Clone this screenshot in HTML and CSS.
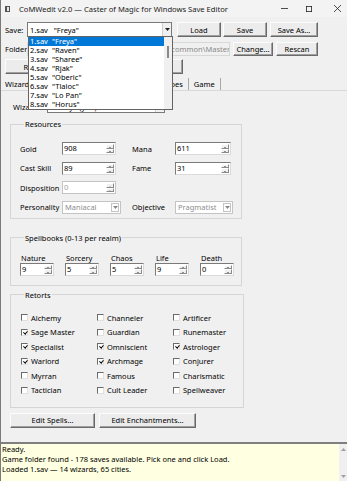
FILE: index.html
```html
<!DOCTYPE html>
<html lang="en">
  <head>
    <meta charset="UTF-8" />
    <title>CoMWedit v2.0 — Caster of Magic for Windows Save Editor</title>
    <link rel="stylesheet" href="styles.css">
  </head>
  <body>
    <div class="window">
      <!-- Title bar -->
      <div class="titlebar">
        <span class="app-icon"></span>
        <span class="title-text">CoMWedit v2.0 — Caster of Magic for Windows Save Editor</span>
        <div class="win-controls">
          <svg class="wc-min" width="7" height="7" viewBox="0 0 7 7"><path d="M0 3.5H7" stroke="#222" stroke-width="0.8"/></svg>
          <svg class="wc-max" width="6" height="6" viewBox="0 0 6 6"><rect x="0.4" y="0.4" width="5.2" height="5.2" fill="none" stroke="#222" stroke-width="0.8"/></svg>
          <svg class="wc-close" width="7" height="7" viewBox="0 0 7 7"><path d="M0 0L7 7M7 0L0 7" stroke="#222" stroke-width="0.8"/></svg>
        </div>
      </div>

      <div class="main">
        <!-- Save file row -->
        <div class="row row-save">
          <span class="row-label">Save:</span>
          <div class="combo save-combo">
            <span class="combo-text">1.sav&nbsp;&nbsp; "Freya"</span>
            <span class="combo-arrow"><svg width="5" height="3" viewBox="0 0 5 3"><path d="M0 0H5L2.5 3Z" fill="#222"/></svg></span>
          </div>
          <button class="btn btn-load">Load</button>
          <button class="btn btn-save">Save</button>
          <button class="btn btn-saveas">Save As...</button>
        </div>

        <!-- Game folder row -->
        <div class="row row-folder">
          <span class="row-label">Folder:</span>
          <div class="entry entry-folder">C:\Program Files (x86)\Steam\steamapps\common\Master of Magic</div>
          <button class="btn btn-change">Change...</button>
          <button class="btn btn-rescan">Rescan</button>
        </div>

        <div class="row row-actions">
          <button class="btn btn-reload">Reload from Disk</button>
          <button class="btn btn-backup">Restore Backup...</button>
        </div>

        <!-- Tabs -->
        <div class="tabs">
          <span class="tab tab-active">Wizards</span>
          <span class="tab">Diplomacy</span>
          <span class="tab">Cities</span>
          <span class="tab">Armies</span>
          <span class="tab">Heroes</span>
          <span class="tab">Game</span>
        </div>

        <div class="tab-panel">
          <div class="wizard-row">
            <span class="wizard-label">Wizard:</span>
            <div class="combo wizard-combo">
              <span class="combo-text">0: Freya (you)</span>
              <span class="combo-arrow"><svg width="5" height="3" viewBox="0 0 5 3"><path d="M0 0H5L2.5 3Z" fill="#222"/></svg></span>
            </div>
          </div>

          <!-- Resources -->
          <fieldset class="group group-resources">
            <legend>Resources</legend>
            <div class="res-grid">
              <span>Gold</span>
              <div class="spin"><span class="spin-val">908</span><span class="spin-arrows"><i class="up"></i><i class="down"></i></span></div>
              <span></span>
              <span>Mana</span>
              <div class="spin"><span class="spin-val">611</span><span class="spin-arrows"><i class="up"></i><i class="down"></i></span></div>

              <span>Cast Skill</span>
              <div class="spin"><span class="spin-val">89</span><span class="spin-arrows"><i class="up"></i><i class="down"></i></span></div>
              <span></span>
              <span>Fame</span>
              <div class="spin"><span class="spin-val">31</span><span class="spin-arrows"><i class="up"></i><i class="down"></i></span></div>

              <span>Disposition</span>
              <div class="spin spin-disabled"><span class="spin-val">0</span><span class="spin-arrows"><i class="up"></i><i class="down"></i></span></div>
              <span></span>
              <span></span>
              <span></span>

              <span>Personality</span>
              <div class="combo combo-disabled combo-personality">
                <span class="combo-text">Maniacal</span>
                <span class="combo-arrow"><svg width="5" height="3" viewBox="0 0 5 3"><path d="M0 0H5L2.5 3Z" fill="#888"/></svg></span>
              </div>
              <span></span>
              <span>Objective</span>
              <div class="combo combo-disabled combo-objective">
                <span class="combo-text">Pragmatist</span>
                <span class="combo-arrow"><svg width="5" height="3" viewBox="0 0 5 3"><path d="M0 0H5L2.5 3Z" fill="#888"/></svg></span>
              </div>
            </div>
          </fieldset>

          <!-- Spellbooks -->
          <fieldset class="group group-books">
            <legend>Spellbooks (0-13 per realm)</legend>
            <div class="books">
              <div class="book"><span class="book-name">Nature</span><div class="spin"><span class="spin-val">9</span><span class="spin-arrows"><i class="up"></i><i class="down"></i></span></div></div>
              <div class="book"><span class="book-name">Sorcery</span><div class="spin"><span class="spin-val">5</span><span class="spin-arrows"><i class="up"></i><i class="down"></i></span></div></div>
              <div class="book"><span class="book-name">Chaos</span><div class="spin"><span class="spin-val">5</span><span class="spin-arrows"><i class="up"></i><i class="down"></i></span></div></div>
              <div class="book"><span class="book-name">Life</span><div class="spin"><span class="spin-val">9</span><span class="spin-arrows"><i class="up"></i><i class="down"></i></span></div></div>
              <div class="book"><span class="book-name">Death</span><div class="spin"><span class="spin-val">0</span><span class="spin-arrows"><i class="up"></i><i class="down"></i></span></div></div>
            </div>
          </fieldset>

          <!-- Retorts -->
          <fieldset class="group group-retorts">
            <legend>Retorts</legend>
            <div class="retorts">
              <label class="check"><span class="box"></span>Alchemy</label>
              <label class="check"><span class="box"></span>Channeler</label>
              <label class="check"><span class="box"></span>Artificer</label>

              <label class="check"><span class="box checked"></span>Sage Master</label>
              <label class="check"><span class="box"></span>Guardian</label>
              <label class="check"><span class="box"></span>Runemaster</label>

              <label class="check"><span class="box checked"></span>Specialist</label>
              <label class="check"><span class="box checked"></span>Omniscient</label>
              <label class="check"><span class="box checked"></span>Astrologer</label>

              <label class="check"><span class="box checked"></span>Warlord</label>
              <label class="check"><span class="box checked"></span>Archmage</label>
              <label class="check"><span class="box"></span>Conjurer</label>

              <label class="check"><span class="box"></span>Myrran</label>
              <label class="check"><span class="box"></span>Famous</label>
              <label class="check"><span class="box"></span>Charismatic</label>

              <label class="check"><span class="box"></span>Tactician</label>
              <label class="check"><span class="box"></span>Cult Leader</label>
              <label class="check"><span class="box"></span>Spellweaver</label>
            </div>
          </fieldset>

          <div class="edit-row">
            <button class="btn btn-spells">Edit Spells...</button>
            <button class="btn btn-ench">Edit Enchantments...</button>
          </div>
        </div>
      </div>

      <!-- Status log -->
      <div class="status">
        <div class="status-text">
          Ready.<br>
          Game folder found - 178 saves available. Pick one and click Load.<br>
          Loaded 1.sav — 14 wizards, 65 cities.
        </div>
        <div class="status-scroll">
          <svg width="5" height="3" viewBox="0 0 5 3"><path d="M0 3H5L2.5 0Z" fill="#a0a0a0"/></svg>
          <svg width="5" height="3" viewBox="0 0 5 3"><path d="M0 0H5L2.5 3Z" fill="#a0a0a0"/></svg>
        </div>
      </div>

      <!-- Open save dropdown -->
      <div class="dropdown">
        <div class="dd-items">
          <div class="dd-item dd-selected"><span class="dd-file">1.sav</span>"Freya"</div>
          <div class="dd-item"><span class="dd-file">2.sav</span>"Raven"</div>
          <div class="dd-item"><span class="dd-file">3.sav</span>"Sharee"</div>
          <div class="dd-item"><span class="dd-file">4.sav</span>"Rjak"</div>
          <div class="dd-item"><span class="dd-file">5.sav</span>"Oberic"</div>
          <div class="dd-item"><span class="dd-file">6.sav</span>"Tlaloc"</div>
          <div class="dd-item"><span class="dd-file">7.sav</span>"Lo Pan"</div>
          <div class="dd-item"><span class="dd-file">8.sav</span>"Horus"</div>
        </div>
        <div class="dd-scroll"><span class="dd-thumb"></span></div>
      </div>
    </div>
  </body>
</html>
```

FILE: styles.css
```css
/* Base */
* {
  box-sizing: border-box;
}

body {
  margin: 0;
  width: 347px;
  height: 481px;
  overflow: hidden;
  background: #f0f0f0;
  color: #000;
  font-family: "Noto Sans", "Open Sans", sans-serif;
  font-size: 7.5px;
  line-height: 10px;
}

.window {
  position: relative;
  height: 481px;
  border-left: 1px solid #7a7a7a;
  display: flex;
  flex-direction: column;
}

/* Title bar */
.titlebar {
  height: 17px;
  flex: none;
  display: flex;
  align-items: center;
  background: #f3f3f3;
}

.app-icon {
  width: 5px;
  height: 6px;
  margin-left: 4px;
  border: 1px solid #555;
  border-left-width: 2px;
  background: #e4e9ef;
}

.title-text {
  margin-left: 9px;
  font-size: 7.6px;
  color: #1a1a1a;
}

.win-controls {
  margin-left: auto;
  display: flex;
  align-items: center;
  padding-right: 6px;
}

.wc-max {
  margin-left: 18px;
}

.wc-close {
  margin-left: 22px;
}

.main {
  flex: 1;
}

/* Toolbar rows */
.row {
  display: flex;
  align-items: stretch;
  margin-left: 4px;
  height: 15px;
}

.row-save {
  margin-top: 5px;
}

.row-folder {
  margin-top: 5px;
  height: 14px;
}

.row-actions {
  margin-top: 3px;
}

.row-label {
  width: 22px;
  display: flex;
  align-items: center;
}

.combo {
  display: flex;
  align-items: center;
  background: #fff;
  border: 1px solid #7a7a7a;
}

.combo-text {
  flex: 1;
  padding-left: 2px;
  white-space: nowrap;
  overflow: hidden;
}

.combo-arrow {
  width: 9px;
  align-self: stretch;
  display: flex;
  align-items: center;
  justify-content: center;
  border-left: 1px solid #d0d0d0;
  background: #f0f0f0;
}

.save-combo {
  width: 145px;
}

.entry {
  display: block;
  padding: 0 4px 0 2px;
  line-height: 12px;
  white-space: nowrap;
  overflow: hidden;
  color: #8a8a8a;
  background: #f0f0f0;
  border: 1px solid #d8d8d8;
}

.entry-folder {
  width: 203px;
  text-indent: -5px;
}

/* Buttons */
.btn {
  font: inherit;
  color: #000;
  padding: 0;
  background: #ececec;
  border: 1px solid;
  border-color: #fcfcfc #6a6a6a #6a6a6a #fcfcfc;
  box-shadow: inset -1px -1px #a0a0a0;
  white-space: nowrap;
}

.btn-load {
  width: 44px;
  margin-left: 5px;
}

.btn-save {
  width: 44px;
  margin-left: 2px;
}

.btn-saveas {
  width: 48px;
  margin-left: 3px;
}

.btn-change {
  width: 40px;
  margin-left: 3px;
}

.btn-rescan {
  width: 42px;
  margin-left: 3px;
}

.btn-reload {
  width: 87px;
  padding-left: 10px;
}

.btn-backup {
  width: 89px;
  margin-left: 2px;
}

/* Tabs */
.tabs {
  display: flex;
  margin-top: 4px;
  padding-left: 2px;
  height: 13px;
  border-bottom: 1px solid #d9d9d9;
}

.tab {
  padding: 0 5px;
  border-right: 1px solid #a8a8a8;
  line-height: 12px;
}

.tab-active {
  padding-left: 2px;
}

/* Wizard picker */
.wizard-row {
  display: flex;
  margin-top: 9px;
  margin-left: 12px;
  height: 13px;
}

.wizard-label {
  width: 34px;
  display: flex;
  align-items: center;
}

.wizard-combo {
  width: 118px;
}

/* Group boxes */
.group {
  margin: 6px 0 0 9px;
  width: 232px;
  border: 1px solid #d5d5d5;
  padding: 0 0 0 9px;
}

.group legend {
  padding: 0 1px;
  margin-left: 4px;
  line-height: 10px;
}

.group-resources {
  padding-top: 13px;
  padding-bottom: 4px;
}

.res-grid {
  display: grid;
  grid-template-columns: 42px 54px 16px 43px 56px;
  grid-auto-rows: 13px;
  row-gap: 6.5px;
  align-items: center;
}

.combo-disabled {
  border-color: #c4c4c4;
  height: 13px;
}

.combo-disabled .combo-text {
  color: #8e8e8e;
}

.combo-disabled .combo-arrow {
  background: #fff;
  border: 1px solid #c4c4c4;
  margin: 1px;
  width: 8px;
}

.combo-personality {
  width: 59px;
}

.combo-objective {
  width: 58px;
}

/* Spin boxes */
.spin {
  display: flex;
  height: 13px;
  background: #fff;
  border: 1px solid;
  border-color: #7a7a7a #dadada #dadada #7a7a7a;
}

.spin-val {
  flex: 1;
  padding-left: 1px;
  line-height: 11px;
}

.spin-arrows {
  width: 8px;
  display: flex;
  flex-direction: column;
  margin: 1px 1px 1px 0;
}

.spin-arrows i {
  flex: 1;
  position: relative;
  background: #f0f0f0;
  border: 1px solid;
  border-color: #fff #8a8a8a #8a8a8a #fff;
}

.spin-arrows i::after {
  content: "";
  position: absolute;
  left: 1.5px;
  border-left: 1.5px solid transparent;
  border-right: 1.5px solid transparent;
}

.spin-arrows .up::after {
  top: 1.5px;
  border-bottom: 1.5px solid #333;
}

.spin-arrows .down::after {
  top: 1.5px;
  border-top: 1.5px solid #333;
}

.spin-disabled {
  border-color: #c4c4c4;
}

.spin-disabled .spin-val {
  color: #a0a0a0;
}

.spin-disabled .spin-arrows i::after {
  border-top-color: #a8a8a8;
  border-bottom-color: #a8a8a8;
}

/* Spellbooks */
.group-books {
  margin-top: 14px;
  padding-top: 10px;
  padding-bottom: 9px;
}

.books {
  display: flex;
  gap: 11px;
}

.book {
  display: flex;
  flex-direction: column;
  width: 34px;
}

.book-name {
  padding-left: 1px;
}

/* Retorts */
.group-retorts {
  margin-top: 4px;
  padding-top: 11px;
  padding-bottom: 9px;
}

.retorts {
  display: grid;
  grid-template-columns: 76px 76px 70px;
  grid-auto-rows: 14.5px;
  padding-left: 1px;
}

.check {
  display: flex;
  align-items: center;
  white-space: nowrap;
}

.box {
  width: 7px;
  height: 7px;
  margin-right: 3px;
  background: #fff;
  border: 1px solid;
  border-color: #6a6a6a #e0e0e0 #e0e0e0 #6a6a6a;
  position: relative;
}

.box.checked::after {
  content: "";
  position: absolute;
  left: 1.5px;
  top: 0;
  width: 1.5px;
  height: 3px;
  border: solid #000;
  border-width: 0 1px 1px 0;
  transform: rotate(40deg);
}

/* Edit buttons */
.edit-row {
  display: flex;
  margin: 5px 0 0 9px;
  height: 15px;
}

.btn-spells {
  width: 85px;
}

.btn-ench {
  width: 97px;
  margin-left: 4px;
}

/* Status log */
.status {
  height: 39px;
  flex: none;
  display: flex;
  border-top: 2px solid #7f7f7f;
  background: #ffffe1;
}

.status-text {
  flex: 1;
  padding: 0 0 0 1px;
  line-height: 10px;
}

.status-scroll {
  width: 8px;
  display: flex;
  flex-direction: column;
  justify-content: space-between;
  align-items: center;
  padding: 4px 0 3px;
  background: #f0f0f0;
}

/* Open combobox list */
.dropdown {
  position: absolute;
  left: 27px;
  top: 36px;
  width: 145px;
  height: 74px;
  display: flex;
  overflow: hidden;
  background: #fff;
  border: 1px solid #646464;
}

.dd-items {
  flex: 1;
}

.dd-item {
  height: 9px;
  line-height: 9px;
  padding-left: 1px;
  white-space: nowrap;
}

.dd-file {
  display: inline-block;
  width: 22px;
}

.dd-selected {
  background: #0078d7;
  color: #fff;
}

.dd-scroll {
  width: 8px;
  position: relative;
  background: #f0f0f0;
}

.dd-thumb {
  position: absolute;
  left: 3px;
  top: 9px;
  width: 2px;
  height: 12px;
  background: #8a8a8a;
}
```
